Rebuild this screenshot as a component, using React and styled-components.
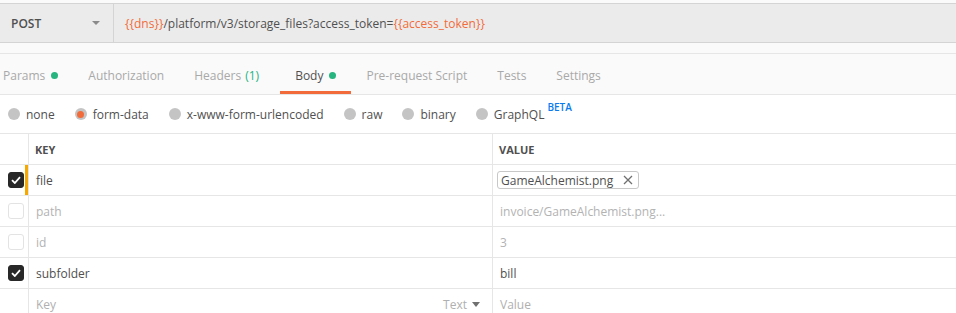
import styled, { createGlobalStyle } from 'styled-components';

const GlobalStyle = createGlobalStyle`
  html, body {
    margin: 0;
    padding: 0;
    background: #fafafa;
    overflow: hidden;
  }
  body {
    font-family: "Open Sans", "Liberation Sans", sans-serif;
    font-size: 12px;
    color: #505050;
  }
`;

const tabs = [
  { name: 'Params', dot: true },
  { name: 'Authorization' },
  { name: 'Headers', count: '(1)' },
  { name: 'Body', dot: true, active: true },
  { name: 'Pre-request Script' },
  { name: 'Tests' },
  { name: 'Settings' },
];

const modes = [
  { name: 'none' },
  { name: 'form-data', checked: true },
  { name: 'x-www-form-urlencoded' },
  { name: 'raw' },
  { name: 'binary' },
  { name: 'GraphQL', beta: true },
];

const rows = [
  { key: 'file', value: 'GameAlchemist.png', file: true, on: true, focus: true },
  { key: 'path', value: 'invoice/GameAlchemist.png...', on: false },
  { key: 'id', value: '3', on: false },
  { key: 'subfolder', value: 'bill', on: true },
];

function App() {
  return (
    <Page>
      <GlobalStyle />
      <UrlBar>
        <Method>
          POST
          <Caret />
        </Method>
        <Url>
          <Var>{'{{dns}}'}</Var>/platform/v3/storage_files?access_token=<Var>{'{{access_token}}'}</Var>
        </Url>
      </UrlBar>
      <Spacer />
      <Tabs>
        {tabs.map((t) => (
          <Tab key={t.name} $active={t.active}>
            {t.name}
            {t.count && <Count>{t.count}</Count>}
            {t.dot && <Dot />}
          </Tab>
        ))}
      </Tabs>
      <Modes>
        {modes.map((m) => (
          <Mode key={m.name}>
            <Radio $checked={m.checked} />
            {m.name}
            {m.beta && <Beta>BETA</Beta>}
          </Mode>
        ))}
      </Modes>
      <Table>
        <Row>
          <CheckCell />
          <Cell $head>Key</Cell>
          <Cell $head>Value</Cell>
        </Row>
        {rows.map((r) => (
          <Row key={r.key}>
            <CheckCell $focus={r.focus}>
              <Check $on={r.on}>
                {r.on && (
                  <svg width="10" height="8" viewBox="0 0 10 8">
                    <path d="M1 4.2 L3.8 7 L9 1.2" fill="none" stroke="#fff" strokeWidth="1.8" />
                  </svg>
                )}
              </Check>
            </CheckCell>
            <Cell $muted={!r.on}>{r.key}</Cell>
            <Cell $muted={!r.on}>
              {r.file ? (
                <FileChip>
                  {r.value}
                  <Close>
                    <svg width="10" height="10" viewBox="0 0 10 10">
                      <path d="M1 1 L9 9 M9 1 L1 9" stroke="#707070" strokeWidth="1.3" />
                    </svg>
                  </Close>
                </FileChip>
              ) : (
                r.value
              )}
            </Cell>
          </Row>
        ))}
        <Row>
          <CheckCell />
          <Cell $placeholder>
            Key
            <TypePick>
              Text <SmallCaret />
            </TypePick>
          </Cell>
          <Cell $placeholder>Value</Cell>
        </Row>
      </Table>
    </Page>
  );
}

const Page = styled.div`
  width: 956px;
  height: 313px;
  padding-top: 3px;
  box-sizing: border-box;
  background: #fafafa;
  overflow: hidden;
`;

const UrlBar = styled.div`
  display: flex;
  height: 38px;
  background: #ebebeb;
  border-top: 1px solid #d4d4d4;
  border-bottom: 1px solid #d4d4d4;
`;

const Method = styled.div`
  width: 114px;
  flex: none;
  display: flex;
  align-items: center;
  justify-content: space-between;
  box-sizing: border-box;
  padding: 0 13px 0 11px;
  border-right: 1px solid #d4d4d4;
  font-weight: 600;
  font-size: 12px;
  color: #505050;
`;

const Caret = styled.span`
  width: 0;
  height: 0;
  border-left: 4px solid transparent;
  border-right: 4px solid transparent;
  border-top: 4px solid #8a8a8a;
`;

const Url = styled.div`
  display: flex;
  align-items: center;
  padding-left: 11px;
  white-space: pre;
  color: #505050;
`;

const Var = styled.span`
  color: #f26b3a;
`;

const Spacer = styled.div`
  height: 10px;
  border-bottom: 1px solid #e6e6e6;
`;

const Tabs = styled.div`
  display: flex;
  height: 40px;
  margin-left: -12px;
  border-bottom: 1px solid #e6e6e6;
`;

const Tab = styled.div`
  display: flex;
  align-items: center;
  padding: 6px 15px 0;
  height: 100%;
  box-sizing: border-box;
  font-size: 12px;
  color: ${(p) => (p.$active ? '#505050' : '#a9a9a9')};
  border-bottom: 3px solid ${(p) => (p.$active ? '#f26b3a' : 'transparent')};
`;

const Count = styled.span`
  margin: 0 6px 0 4px;
  color: #26b47f;
`;

const Dot = styled.span`
  width: 7px;
  height: 7px;
  margin-left: 6px;
  border-radius: 50%;
  background: #26b47f;
`;

const Modes = styled.div`
  display: flex;
  align-items: center;
  gap: 20px;
  height: 38px;
  padding-left: 8px;
  background: #fff;
`;

const Mode = styled.div`
  display: flex;
  align-items: center;
  font-size: 12px;
  color: #505050;
`;

const Radio = styled.span`
  width: 12px;
  height: 12px;
  margin-right: 6px;
  border-radius: 50%;
  background: #c4c4c4;
  display: flex;
  align-items: center;
  justify-content: center;
  &::after {
    content: '';
    display: ${(p) => (p.$checked ? 'block' : 'none')};
    width: 7px;
    height: 7px;
    border-radius: 50%;
    background: #f26b3a;
  }
`;

const Beta = styled.sup`
  align-self: flex-start;
  margin: -6px 0 0 3px;
  font-size: 10px;
  font-weight: 600;
  color: #097bed;
`;

const Table = styled.div`
  background: #fff;
  border-top: 1px solid #e6e6e6;
`;

const Row = styled.div`
  display: grid;
  grid-template-columns: 29px 464px 1fr;
  height: 30px;
  border-bottom: 1px solid #e6e6e6;
`;

const CheckCell = styled.div`
  position: relative;
  display: flex;
  align-items: center;
  padding-left: 8px;
  border-right: 1px solid #e6e6e6;
  &::after {
    content: '';
    display: ${(p) => (p.$focus ? 'block' : 'none')};
    position: absolute;
    right: 0;
    top: 0;
    bottom: 0;
    width: 3px;
    background: #f6a800;
  }
`;

const Check = styled.span`
  width: 16px;
  height: 16px;
  box-sizing: border-box;
  border-radius: 3px;
  display: flex;
  align-items: center;
  justify-content: center;
  background: ${(p) => (p.$on ? '#282828' : '#fff')};
  border: 1px solid ${(p) => (p.$on ? '#282828' : '#e3e3e3')};
`;

const Cell = styled.div`
  display: flex;
  align-items: center;
  justify-content: space-between;
  padding: 0 12px 0 ${(p) => (p.$head ? '6px' : '7px')};
  border-right: 1px solid #e6e6e6;
  font-size: ${(p) => (p.$head ? '11px' : '12px')};
  font-weight: ${(p) => (p.$head ? 700 : 400)};
  text-transform: ${(p) => (p.$head ? 'uppercase' : 'none')};
  color: ${(p) => (p.$head ? '#505050' : p.$placeholder ? '#b0b0b0' : p.$muted ? '#b3b3b3' : '#505050')};
  &:last-child {
    border-right: none;
  }
`;

const FileChip = styled.span`
  display: inline-flex;
  align-items: center;
  gap: 10px;
  height: 16px;
  padding: 0 5px 0 3px;
  margin-left: -3px;
  border: 1px solid #c8c8c8;
  border-radius: 3px;
  color: #505050;
`;

const Close = styled.span`
  display: flex;
  align-items: center;
`;

const TypePick = styled.span`
  display: flex;
  align-items: center;
  gap: 5px;
  color: #b0b0b0;
`;

const SmallCaret = styled.span`
  width: 0;
  height: 0;
  border-left: 4px solid transparent;
  border-right: 4px solid transparent;
  border-top: 5px solid #707070;
`;

export default App;
